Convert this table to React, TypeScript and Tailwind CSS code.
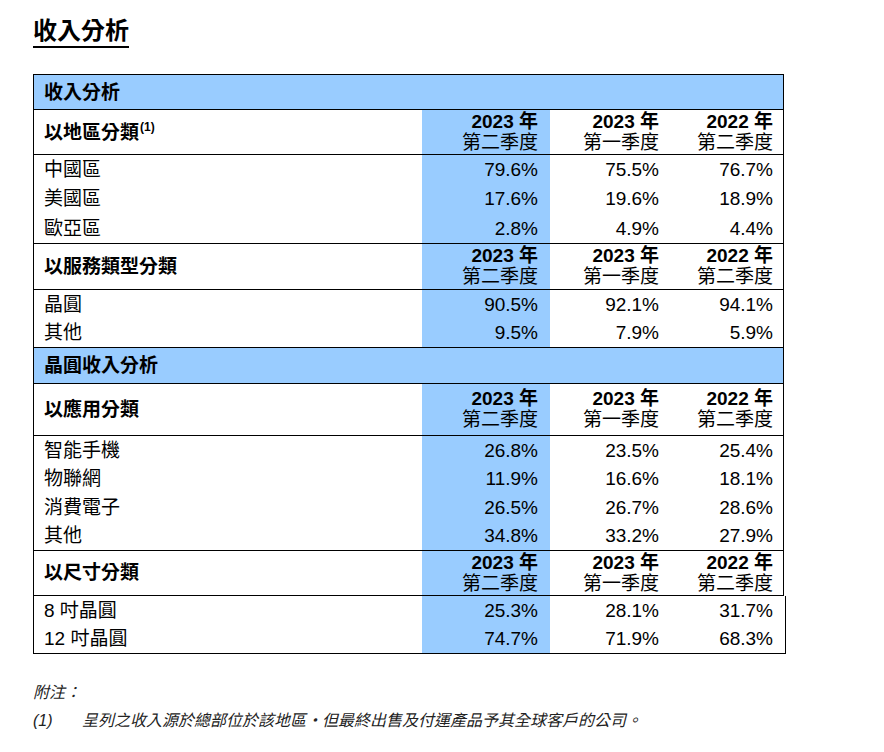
const font = "font-['Liberation_Sans','Noto_Sans_CJK_TC',sans-serif]";

type Row = { label: string; values: [string, string, string] };

const cols = [
  { year: "2023 年", q: "第二季度" },
  { year: "2023 年", q: "第一季度" },
  { year: "2022 年", q: "第二季度" },
];

const grid = "grid grid-cols-[388px_128px_120px_113px]";

function TitleRow({ text, h }: { text: string; h: string }) {
  return (
    <div className={`${h} flex items-center border-x border-b border-black bg-[#99ccff] pl-[10px] text-[19px] font-bold leading-none`}>
      {text}
    </div>
  );
}

function HeaderRow({ label, sup, h }: { label: string; sup?: boolean; h: string }) {
  return (
    <div className={`${grid} ${h} border-x border-b border-black`}>
      <div className="flex items-center pl-[10px] text-[19px] font-bold leading-none">
        {label}
        {sup && <span className="relative -top-[5px] ml-[1px] text-[12px] font-bold">(1)</span>}
      </div>
      {cols.map((c, i) => (
        <div
          key={i}
          className={`flex flex-col items-end justify-center text-[19px] leading-[21px] ${
            i === 0 ? "bg-[#99ccff] pr-[12px]" : i === 1 ? "pr-[11px]" : "pr-[10px]"
          }`}
        >
          <span className="font-bold">{c.year}</span>
          <span>{c.q}</span>
        </div>
      ))}
    </div>
  );
}

function DataBlock({ rows, rowH, wide }: { rows: Row[]; rowH: string; wide?: boolean }) {
  return (
    <div className={`border-x border-b border-black ${wide ? "w-[753px]" : ""}`}>
      {rows.map((r) => (
        <div key={r.label} className={`${grid} ${rowH} text-[19px] leading-none`}>
          <div className="flex items-center pl-[10px]">{r.label}</div>
          <div className="flex items-center justify-end bg-[#99ccff] pr-[12px]">{r.values[0]}</div>
          <div className="flex items-center justify-end pr-[11px]">{r.values[1]}</div>
          <div className="flex items-center justify-end pr-[10px]">{r.values[2]}</div>
        </div>
      ))}
    </div>
  );
}

export default function App() {
  return (
    <div lang="zh-TW" className={`${font} min-h-[752px] w-[884px] bg-white pl-[33px] pt-[17px] text-black`}>
      <h1 className="inline-block border-b-2 border-black pb-[1px] text-[24px] font-bold leading-[28px]">
        收入分析
      </h1>

      <div className="mt-[26px] w-[751px] border-t border-black">
        <TitleRow text="收入分析" h="h-[35px]" />
        <HeaderRow label="以地區分類" sup h="h-[45px]" />
        <DataBlock
          rowH="h-[29.3px]"
          rows={[
            { label: "中國區", values: ["79.6%", "75.5%", "76.7%"] },
            { label: "美國區", values: ["17.6%", "19.6%", "18.9%"] },
            { label: "歐亞區", values: ["2.8%", "4.9%", "4.4%"] },
          ]}
        />
        <HeaderRow label="以服務類型分類" h="h-[46px]" />
        <DataBlock
          rowH="h-[28.5px]"
          rows={[
            { label: "晶圓", values: ["90.5%", "92.1%", "94.1%"] },
            { label: "其他", values: ["9.5%", "7.9%", "5.9%"] },
          ]}
        />
        <TitleRow text="晶圓收入分析" h="h-[36px]" />
        <HeaderRow label="以應用分類" h="h-[52px]" />
        <DataBlock
          rowH="h-[28.5px]"
          rows={[
            { label: "智能手機", values: ["26.8%", "23.5%", "25.4%"] },
            { label: "物聯網", values: ["11.9%", "16.6%", "18.1%"] },
            { label: "消費電子", values: ["26.5%", "26.7%", "28.6%"] },
            { label: "其他 ", values: ["34.8%", "33.2%", "27.9%"] },
          ]}
        />
        <HeaderRow label="以尺寸分類" h="h-[45px]" />
        <DataBlock
          wide
          rowH="h-[28.5px]"
          rows={[
            { label: "8 吋晶圓", values: ["25.3%", "28.1%", "31.7%"] },
            { label: "12 吋晶圓", values: ["74.7%", "71.9%", "68.3%"] },
          ]}
        />
      </div>

      <div className="mt-[29px] text-[16px] italic leading-[20px] text-[#222]">
        <p>附注：</p>
        <div className="mt-[8px] flex">
          <span className="w-[49px]">(1)</span>
          <span>呈列之收入源於總部位於該地區・但最終出售及付運產品予其全球客戶的公司。</span>
        </div>
      </div>
    </div>
  );
}
